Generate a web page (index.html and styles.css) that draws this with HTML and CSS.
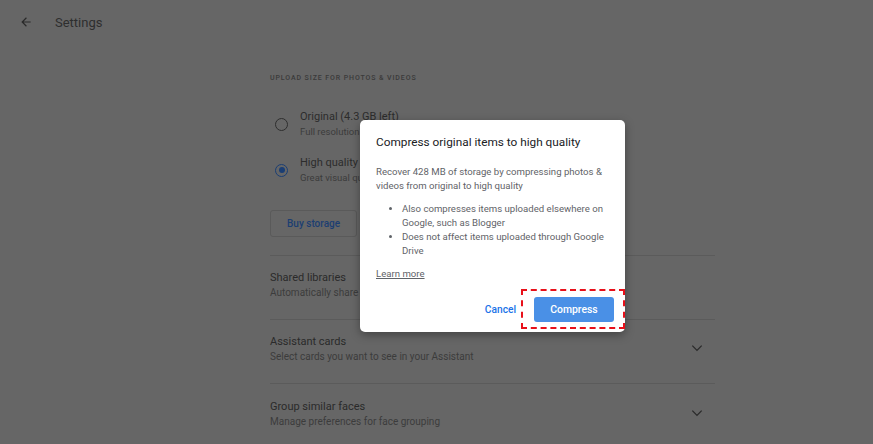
FILE: index.html
```html
<!DOCTYPE html>
<html lang="en">
<head>
    <meta charset="UTF-8">
    <title>Settings</title>
    <link rel="stylesheet" href="styles.css">
</head>
<body>
    <div class="topbar">
        <svg class="back" width="14" height="14" viewBox="0 0 24 24"><path d="M20 11H7.83l5.59-5.59L12 4l-8 8 8 8 1.41-1.41L7.83 13H20v-2z"/></svg>
        <span class="page-title">Settings</span>
    </div>

    <div class="content">
        <div class="section-label">UPLOAD SIZE FOR PHOTOS &amp; VIDEOS</div>

        <div class="option">
            <span class="radio"></span>
            <div class="option-text">
                <div class="option-title">Original (4.3 GB left)</div>
                <div class="option-sub">Full resolution that counts against your quota</div>
            </div>
        </div>
        <div class="option">
            <span class="radio checked"></span>
            <div class="option-text">
                <div class="option-title">High quality (free unlimited storage)</div>
                <div class="option-sub">Great visual quality at reduced file size</div>
            </div>
        </div>

        <div class="buy-row">
            <span class="btn-outline">Buy storage</span>
        </div>

        <div class="setting">
            <div>
                <div class="setting-title">Shared libraries</div>
                <div class="setting-sub">Automatically share photos with a partner</div>
            </div>
        </div>
        <div class="setting">
            <div>
                <div class="setting-title">Assistant cards</div>
                <div class="setting-sub">Select cards you want to see in your Assistant</div>
            </div>
            <svg class="chevron" width="14" height="14" viewBox="0 0 24 24"><path d="M4 8l8 8 8-8" fill="none" stroke-width="2.2"/></svg>
        </div>
        <div class="setting">
            <div>
                <div class="setting-title">Group similar faces</div>
                <div class="setting-sub">Manage preferences for face grouping</div>
            </div>
            <svg class="chevron" width="14" height="14" viewBox="0 0 24 24"><path d="M4 8l8 8 8-8" fill="none" stroke-width="2.2"/></svg>
        </div>
    </div>

    <div class="dialog">
        <div class="dialog-title">Compress original items to high quality</div>
        <p class="dialog-text">Recover 428 MB of storage by compressing photos &amp; videos from original to high quality</p>
        <ul class="dialog-list">
            <li>Also compresses items uploaded elsewhere on Google, such as Blogger</li>
            <li>Does not affect items uploaded through Google Drive</li>
        </ul>
        <a class="learn" href="#">Learn more</a>
        <div class="dialog-actions">
            <span class="btn-text">Cancel</span>
            <span class="highlight">
                <span class="btn-primary">Compress</span>
            </span>
        </div>
    </div>
</body>
</html>
```

FILE: styles.css
```css
html, body {
    margin: 0;
    padding: 0;
}
body {
    font-family: Roboto, "Liberation Sans", Arial, sans-serif;
    background-color: #666;
    width: 873px;
    height: 444px;
    overflow: hidden;
    position: relative;
    color: #2c2c2c;
}
.topbar {
    height: 44px;
    display: flex;
    align-items: center;
    padding-left: 19px;
}
.back {
    fill: #2a2a2a;
}
.page-title {
    margin-left: 22px;
    font-size: 13px;
    color: #2e2e2e;
}
.content {
    margin-left: 270px;
    width: 445px;
}
.section-label {
    margin-top: 28px;
    height: 12px;
    line-height: 12px;
    font-size: 7px;
    letter-spacing: 0.9px;
    color: #3a3a3a;
    font-weight: 500;
}
.option {
    display: flex;
    align-items: center;
    height: 46px;
}
.section-label + .option {
    margin-top: 17px;
}
.radio {
    width: 11px;
    height: 11px;
    border: 1.6px solid #2e2e2e;
    border-radius: 50%;
    margin-left: 5px;
    margin-right: 12px;
    position: relative;
}
.radio.checked {
    border-color: #1a3e74;
}
.radio.checked::after {
    content: "";
    position: absolute;
    left: 2.5px;
    top: 2.5px;
    width: 6px;
    height: 6px;
    border-radius: 50%;
    background-color: #1a3e74;
}
.option-title {
    font-size: 11px;
    line-height: 15px;
    color: #2c2c2c;
}
.option-sub {
    font-size: 9.5px;
    line-height: 15px;
    color: #3c3c3c;
}
.buy-row {
    padding-top: 17px;
    padding-bottom: 18px;
    border-bottom: 1px solid #5b5b5b;
}
.btn-outline {
    display: inline-block;
    border: 1px solid #5a5a5a;
    border-radius: 3px;
    height: 25px;
    line-height: 25px;
    padding: 0 16px;
    font-size: 10px;
    font-weight: 500;
    color: #1c3e72;
}
.setting {
    height: 64px;
    display: flex;
    align-items: flex-start;
    justify-content: space-between;
    border-bottom: 1px solid #5b5b5b;
    box-sizing: border-box;
    padding-top: 14px;
}
.setting:last-child {
    border-bottom: none;
    padding-top: 15px;
}
.setting-title {
    font-size: 11px;
    line-height: 15px;
    color: #2a2a2a;
}
.setting-sub {
    font-size: 10px;
    line-height: 16px;
    color: #3c3c3c;
}
.chevron {
    stroke: #2a2a2a;
    margin-right: 11px;
    margin-top: 7px;
}
.dialog {
    position: absolute;
    left: 360px;
    top: 120px;
    width: 265px;
    height: 212px;
    box-sizing: border-box;
    background-color: #fff;
    border-radius: 5px;
    box-shadow: 0 3px 10px rgba(0, 0, 0, 0.35);
    padding: 15px 16px 0 16px;
}
.dialog-title {
    font-size: 11.8px;
    line-height: 15px;
    color: #202124;
}
.dialog-text {
    margin: 15px 0 0 0;
    font-size: 9.6px;
    line-height: 14px;
    color: #5f6368;
}
.dialog-list {
    margin: 9px 0 0 0;
    padding-left: 26px;
    font-size: 9.6px;
    line-height: 14px;
    color: #5f6368;
}
.learn {
    display: inline-block;
    margin-top: 9px;
    font-size: 9.6px;
    line-height: 14px;
    color: #5f6368;
}
.dialog-actions {
    display: flex;
    justify-content: flex-end;
    align-items: center;
    margin-top: 8px;
    margin-right: -16px;
}
.btn-text {
    font-size: 10.2px;
    font-weight: 500;
    color: #1a73e8;
    margin-right: 5px;
}
.highlight {
    border: 2px dashed #e8101a;
    padding: 6px 9px 5px 11px;
}
.btn-primary {
    display: block;
    width: 80px;
    height: 25px;
    line-height: 25px;
    text-align: center;
    border-radius: 3px;
    background-color: #4a90e6;
    color: #fff;
    font-size: 10.4px;
    font-weight: 500;
}
```
